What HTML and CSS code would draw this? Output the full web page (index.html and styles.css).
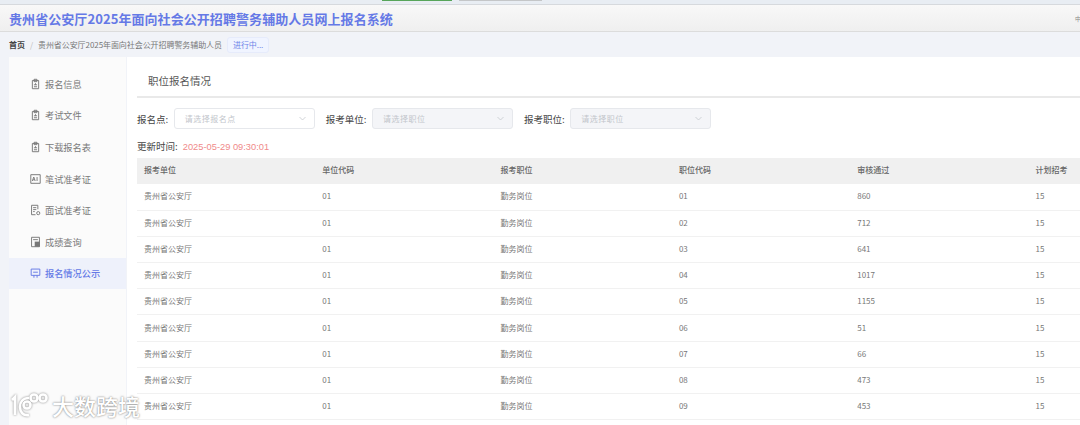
FILE: index.html
```html
<!DOCTYPE html>
<html lang="zh-CN">
<head>
<meta charset="utf-8">
<title>报名系统</title>
<link rel="stylesheet" href="styles.css">
</head>
<body>
<div class="tabstrip"><span class="tab tab-green"></span><span class="tab tab-grey"></span></div>
<header class="topbar">
  <h1>贵州省公安厅2025年面向社会公开招聘警务辅助人员网上报名系统</h1>
  <span class="topbar-end">中</span>
</header>
<nav class="crumbs">
  <b>首页</b><i>/</i><span>贵州省公安厅2025年面向社会公开招聘警务辅助人员</span><em>进行中...</em>
</nav>
<div class="layout">
  <aside class="side">
    <a><svg viewBox="0 0 14 14"><path d="M3 2.500h8v10.500H3zM5.200 1h3.600v3H5.200zM5 8h4M5 10.500h4M7 6v2"/></svg>报名信息</a>
    <a><svg viewBox="0 0 14 14"><path d="M3 2.500h8v10.500H3zM5.200 1h3.600v3H5.200zM5 8h4M5 10.500h4M7 6v2"/></svg>考试文件</a>
    <a><svg viewBox="0 0 14 14"><path d="M3 2.500h8v10.500H3zM5.200 1h3.600v3H5.200zM5 8h4M5 10.500h4M7 6v2"/></svg>下载报名表</a>
    <a><svg viewBox="0 0 14 14"><path d="M1 1.500h12v11H1zM3 9.500l1.800-5 1.800 5M3.700 8h2.200M9 4.500v5"/></svg>笔试准考证</a>
    <a><svg viewBox="0 0 14 14"><path d="M10 6V1H2v12h5M4 4h4M4 6.500h4M4 9h2"/><circle cx="10.500" cy="11" r="2"/></svg>面试准考证</a>
    <a><svg viewBox="0 0 14 14"><path d="M2 1h10v12H2zM4 4h6"/><path class="fill" d="M6 6.500h6.500V13H6z"/></svg>成绩查询</a>
    <a class="on"><svg viewBox="0 0 14 14"><path d="M1.500 2h11v8h-11zM5 10v3M9 10v3M4 6h6"/></svg>报名情况公示</a>
  </aside>
  <main class="panel">
    <h2>职位报名情况</h2>
    <form class="filters">
      <label>报名点:</label>
      <div class="select">请选择报名点<svg viewBox="0 0 12 12"><path d="M2 4l4 4 4-4"/></svg></div>
      <label>报考单位:</label>
      <div class="select off">请选择职位<svg viewBox="0 0 12 12"><path d="M2 4l4 4 4-4"/></svg></div>
      <label>报考职位:</label>
      <div class="select off">请选择职位<svg viewBox="0 0 12 12"><path d="M2 4l4 4 4-4"/></svg></div>
    </form>
    <p class="updated">更新时间: <span>2025-05-29 09:30:01</span></p>
    <table>
      <thead><tr><th>报考单位</th><th>单位代码</th><th>报考职位</th><th>职位代码</th><th>审核通过</th><th>计划招考</th></tr></thead>
      <tbody>
        <tr><td>贵州省公安厅</td><td>01</td><td>勤务岗位</td><td>01</td><td>860</td><td>15</td></tr>
        <tr><td>贵州省公安厅</td><td>01</td><td>勤务岗位</td><td>02</td><td>712</td><td>15</td></tr>
        <tr><td>贵州省公安厅</td><td>01</td><td>勤务岗位</td><td>03</td><td>641</td><td>15</td></tr>
        <tr><td>贵州省公安厅</td><td>01</td><td>勤务岗位</td><td>04</td><td>1017</td><td>15</td></tr>
        <tr><td>贵州省公安厅</td><td>01</td><td>勤务岗位</td><td>05</td><td>1155</td><td>15</td></tr>
        <tr><td>贵州省公安厅</td><td>01</td><td>勤务岗位</td><td>06</td><td>51</td><td>15</td></tr>
        <tr><td>贵州省公安厅</td><td>01</td><td>勤务岗位</td><td>07</td><td>66</td><td>15</td></tr>
        <tr><td>贵州省公安厅</td><td>01</td><td>勤务岗位</td><td>08</td><td>473</td><td>15</td></tr>
        <tr><td>贵州省公安厅</td><td>01</td><td>勤务岗位</td><td>09</td><td>453</td><td>15</td></tr>
      </tbody>
    </table>
  </main>
</div>
<div class="mark">
  <svg viewBox="0 0 40 26"><path d="M2 8l3-3v18M19 6c-6 0-9 4-9 9s3 9 9 8"/><circle cx="17" cy="13" r="3.500"/><circle cx="24" cy="6" r="3.500"/><circle cx="33" cy="6" r="3.500"/></svg>
  <span>大数跨境</span>
</div>
</body>
</html>
```
FILE: styles.css
```css
* { box-sizing: border-box; }
html, body { margin: 0; height: 425px; overflow: hidden; }
body { position: relative; background: #f1f3f8; font-family: "Noto Sans CJK SC", "Liberation Sans", sans-serif; color: #666; }
.tabstrip { height: 5px; background: #e8edf3; border-bottom: 1px solid #d6d9dd; padding-left: 382px; display: flex; gap: 7px; align-items: flex-start; }
.tab { height: 1px; display: block; }
.tab-green { width: 70px; background: #57a55a; }
.tab-grey { width: 83px; background: #c4c6c8; }
.topbar { height: 27px; background: linear-gradient(#f8f8f8, #efefef); border-bottom: 1px solid #dcdcdc; display: flex; align-items: center; justify-content: space-between; padding: 0 0 0 9px; overflow: hidden; }
.topbar h1 { margin: 0; font-size: 13px; letter-spacing: .07px; font-weight: 700; color: #6579e6; white-space: nowrap; }
.topbar-end { font-size: 6px; color: #888; margin-right: -1px; }
.crumbs { height: 25px; padding: 0 0 0 9px; display: flex; align-items: center; font-size: 8px; letter-spacing: -.07px; color: #777; }
.crumbs b { color: #444; font-weight: 700; }
.crumbs i { font-style: normal; margin: 0 5px; color: #bbb; }
.crumbs em { font-style: normal; color: #6f83e8; background: #f0f4ff; border: 1px solid #e6ebfb; border-radius: 3px; height: 16px; line-height: 14px; padding: 0 5px; margin-left: 5px; }
.layout { display: flex; padding-left: 9px; height: 368px; overflow: hidden; }
.side { width: 117px; background: #fbfbfb; flex: none; padding-top: 11px; }
.side a { height: 31.600px; display: flex; align-items: center; padding-left: 21px; gap: 4px; font-size: 9.200px; color: #7a7a7a; }
.side svg { width: 11px; height: 12px; fill: none; stroke: #777; stroke-width: 1.200; flex: none; }
.side svg .fill { fill: #777; stroke: none; }
.side a.on { background: #eef1fb; color: #6579e6; font-weight: 500; }
.side a.on svg { stroke: #6579e6; }
.panel { flex: 1; min-width: 0; background: #fff; margin-left: 1px; padding: 0 0 0 10px; }
.panel h2 { height: 41px; margin: 0; border-bottom: 2px solid #e9e9e9; font-size: 10.500px; font-weight: 400; color: #555; line-height: 48px; padding-left: 11px; overflow: hidden; }
.filters { display: flex; align-items: center; height: 21px; margin-top: 10px; }
.filters label { font-size: 9.500px; color: #444; white-space: nowrap; margin-right: 5.600px; }
.select { width: 141px; flex: none; height: 21px; border-radius: 3px; border: 1px solid #e6e8ec; font-size: 8px; color: #c2c5cb; padding-left: 10px; display: flex; align-items: center; justify-content: space-between; margin-right: 11px; letter-spacing: .5px; }
.select svg { width: 9px; height: 9px; fill: none; stroke: #c2c5cb; margin-right: 7px; }
.select.off { background: #f4f5f8; }
.updated { margin: 0; height: 29px; padding-top: 10px; font-size: 9.500px; line-height: 15px; color: #444; }
.updated span { color: #f08a8a; font-family: "Liberation Sans", sans-serif; font-size: 9.300px; margin-left: 3px; }
table { border-collapse: collapse; table-layout: fixed; width: 947px; font-size: 8px; }
th:nth-child(-n+5) { width: 178.300px; }
th { height: 26px; background: #f0f0f0; color: #666; font-weight: 500; text-align: left; padding: 0 0 3px 7px; }
td { height: 26.200px; padding: 0 0 2px 7px; border-bottom: 1px solid #f1f1f1; color: #777; }
.mark { position: absolute; left: 10px; top: 392px; display: flex; align-items: center; gap: 2px; color: #fff; }
.mark svg { width: 40px; height: 26px; fill: none; stroke: #fff; stroke-width: 2.600; filter: drop-shadow(0 0 1px #888); }
.mark span { font-size: 22px; line-height: 26px; text-shadow: 0 0 2px #666; font-weight: 500; }
```
